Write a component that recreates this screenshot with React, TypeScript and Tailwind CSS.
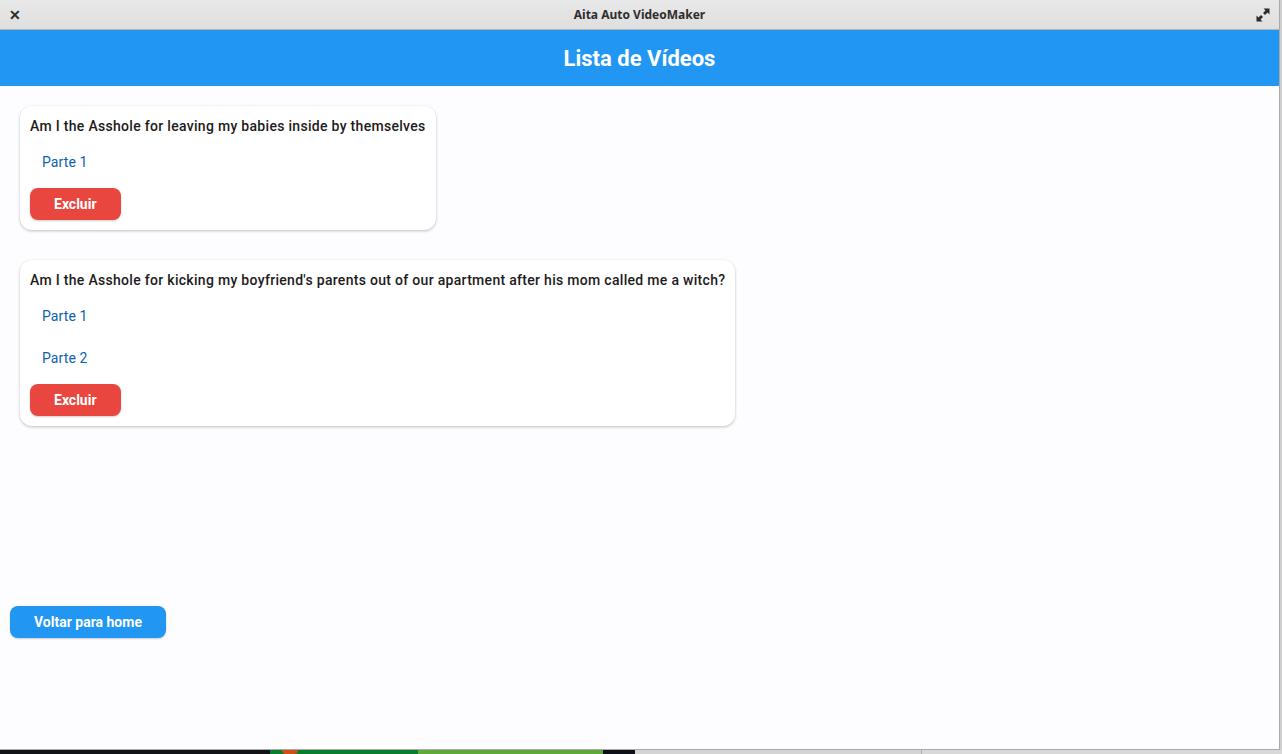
import React from "react";

type Video = {
    title: string;
    parts: string[];
};

const videos: Video[] = [
    {
        title: "Am I the Asshole for leaving my babies inside by themselves",
        parts: ["Parte 1"],
    },
    {
        title: "Am I the Asshole for kicking my boyfriend's parents out of our apartment after his mom called me a witch?",
        parts: ["Parte 1", "Parte 2"],
    },
];

const ExpandIcon: React.FC = () => (
    <svg width="14" height="14" viewBox="0 0 14 14" fill="none">
        <path d="M7.5 0.5H13.5V6.5L11.5 4.5L9 7L7 5L9.5 2.5Z" fill="#2b2b2b" />
        <path d="M6.5 13.5H0.5V7.5L2.5 9.5L5 7L7 9L4.5 11.5Z" fill="#2b2b2b" />
    </svg>
);

const VideoCard: React.FC<{ video: Video }> = ({ video }) => {
    return (
        <div className="w-fit bg-white rounded-[12px] p-[10px] shadow-[0_1px_3px_rgba(0,0,0,0.25)]">
            <h3 className="h-[20px] leading-[20px] text-[14px] font-medium tracking-[0.3px] text-[#1d1b20] whitespace-nowrap">
                {video.title}
            </h3>

            <div className="flex flex-col mt-[5px]">
                {video.parts.map((part) => (
                    <div key={part} className="h-[42px] flex items-center px-3">
                        <span className="text-[14px] tracking-[0.1px] text-[#0b63ad]">{part}</span>
                    </div>
                ))}
            </div>

            <button className="mt-[5px] h-[32px] px-6 rounded-[8px] bg-[#e9463f] text-white text-[14px] font-bold shadow-[0_1px_2px_rgba(0,0,0,0.2)]">
                Excluir
            </button>
        </div>
    );
};

const App: React.FC = () => {
    return (
        <div
            className="w-[1282px] h-[754px] overflow-hidden bg-[#cfcfcf] flex flex-col"
            style={{ fontFamily: "Roboto, 'Liberation Sans', sans-serif" }}
        >
            <div className="flex flex-1 min-h-0">
                {/* Window */}
                <div className="w-[1280px] h-[750px] flex flex-col border-r border-b border-[#a9a9a9] bg-[#fdfcff]">

                    {/* Title bar */}
                    <div className="h-[30px] shrink-0 flex items-center justify-between px-[9px] bg-gradient-to-b from-[#e8e8e8] to-[#dfdfdf] border-b border-[#b4b4b4]">
                        <span className="text-[14px] font-bold text-[#2b2b2b] leading-none w-[14px]">✕</span>
                        <span className="text-[12px] font-bold text-[#2e2e2e]" style={{ fontFamily: "'Noto Sans', sans-serif" }}>
                            Aita Auto VideoMaker
                        </span>
                        <span className="w-[14px] flex justify-end"><ExpandIcon /></span>
                    </div>

                    {/* Header */}
                    <div className="h-[56px] shrink-0 bg-[#2196f3] flex items-center justify-center">
                        <h1 className="text-[22px] font-bold text-white">Lista de Vídeos</h1>
                    </div>

                    {/* List */}
                    <div className="h-[520px] shrink-0 px-[20px] pt-[20px] flex flex-col gap-[30px]">
                        {videos.map((v) => (
                            <VideoCard key={v.title} video={v} />
                        ))}
                    </div>

                    <div className="pl-[10px]">
                        <button className="h-[32px] px-6 rounded-[8px] bg-[#2196f3] text-white text-[14px] font-bold shadow-[0_1px_2px_rgba(0,0,0,0.2)]">
                            Voltar para home
                        </button>
                    </div>
                </div>
            </div>

            {/* Desktop behind the window */}
            <div className="h-[4px] shrink-0 flex">
                <div className="w-[270px] bg-[#101215]" />
                <div className="w-[148px] bg-[#0b7d2f] relative">
                    <div className="absolute left-[12px] top-0 w-[16px] h-[4px] rounded-b-full bg-[#d0501a]" />
                </div>
                <div className="w-[185px] bg-[#5fa83a]" />
                <div className="w-[32px] bg-[#0d1117]" />
                <div className="w-[286px] bg-[#d4d4d4]" />
                <div className="flex-1 bg-[#d8d8d8] border-l border-[#b0b0b0]" />
            </div>
        </div>
    );
};

export default App;
